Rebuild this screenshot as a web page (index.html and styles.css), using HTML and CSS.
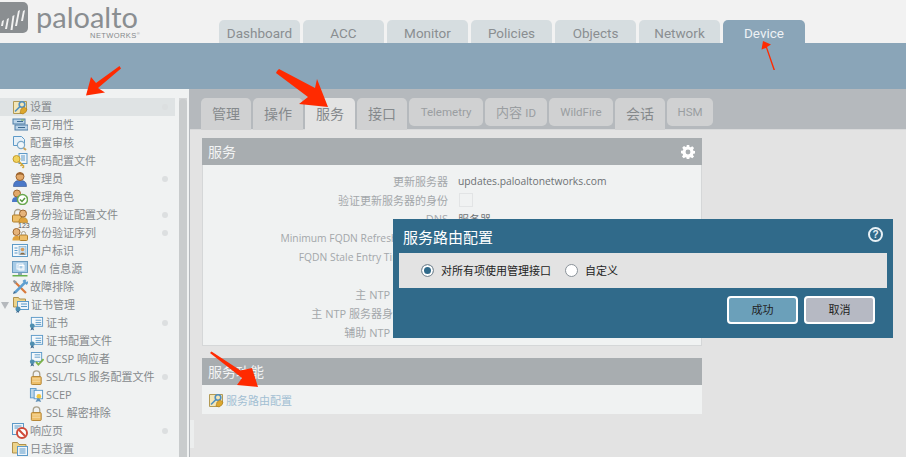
FILE: index.html
```html
<!DOCTYPE html>
<html lang="zh">
<head>
<meta charset="utf-8">
<title>Device</title>
<link rel="stylesheet" href="styles.css">
</head>
<body>
<svg class="defs" width="0" height="0" aria-hidden="true">
  <defs>
    <symbol id="i-keyfolder" viewBox="0 0 16 16"><path d="M1.5 2.5h13v9l-3 3h-10z" fill="#f3e6b8" stroke="#b39a55"/><circle cx="10" cy="5.5" r="2.8" fill="none" stroke="#4f8fc0" stroke-width="1.6"/><path d="M8 7.5l-5 5" stroke="#4f8fc0" stroke-width="1.6"/><path d="M9 10l3-2 3 2-1 3-3 2-3-1z" fill="#dca72f" stroke="#a87a1c" stroke-width=".6"/></symbol>
    <symbol id="i-server" viewBox="0 0 16 16"><rect x="1" y="2" width="12" height="5" fill="#b9d3e8" stroke="#4f7ea8"/><rect x="3" y="8" width="13" height="5" fill="#b9d3e8" stroke="#4f7ea8"/><path d="M5 4.500h6M6 10.500h7" stroke="#3d6a91"/><path d="M9 3h3" stroke="#7cb24a"/></symbol>
    <symbol id="i-audit" viewBox="0 0 16 16"><path d="M1.500 1.500h8l3 3v6h-11z" fill="#e7f0f7" stroke="#5d9ac8"/><circle cx="9" cy="10" r="3.600" fill="#f0f6fa" stroke="#7aa7c7" stroke-width="1.200"/><path d="M11.500 13l2.500 2" stroke="#c9a45b" stroke-width="2"/></symbol>
    <symbol id="i-key" viewBox="0 0 16 16"><rect x="7" y="0.500" width="8" height="10" fill="#eef4f9" stroke="#5d9ac8"/><path d="M9 3h4M9 5h4M9 7h4" stroke="#5d9ac8"/><circle cx="4.500" cy="6" r="3.500" fill="#f1d35c" stroke="#c59c2d"/><path d="M7 8.500l5 5M10 11.500l-1.500 1.500M12 13.500l-1.500 1.500" stroke="#d1a73a" stroke-width="1.700"/></symbol>
    <symbol id="i-user" viewBox="0 0 16 16"><path d="M1.500 15.500c0-5 2.500-6 6.500-6s6.500 1 6.500 6z" fill="#4a78c8" stroke="#2f518f" stroke-width=".6"/><circle cx="8" cy="5.500" r="4" fill="#e2a868" stroke="#9c6530"/><path d="M4.200 4.500c1-3.600 6.500-3.600 7.600 0-2.500-1.200-5-1.200-7.600 0z" fill="#9c6530"/></symbol>
    <symbol id="i-role" viewBox="0 0 16 16"><path d="M0 13c0-4 1.500-5 5-5s5 1 5 5z" fill="#4a78c8"/><circle cx="5" cy="4.500" r="3.500" fill="#e2a868" stroke="#9c6530"/><circle cx="10.500" cy="10.500" r="5" fill="#fff" stroke="#68a84e" stroke-width="1.500"/><path d="M8 10.500l2 2 3-3.500" fill="none" stroke="#55953b" stroke-width="1.500"/></symbol>
    <symbol id="i-lockuser" viewBox="0 0 16 16"><path d="M2.500 8V6a3.500 3.500 0 0 1 7 0v2" fill="none" stroke="#a9a08a" stroke-width="1.300"/><rect x="0.500" y="8" width="9" height="7" rx="1" fill="#eebf6a" stroke="#b07f2c"/><path d="M7 15.500c0-4 1.500-5 4-5s4.500 1 4.500 5z" fill="#e0a33f" stroke="#a87a1c" stroke-width=".6"/><circle cx="11" cy="6.500" r="3.500" fill="#e6b37a" stroke="#9c6530"/></symbol>
    <symbol id="i-lockseq" viewBox="0 0 16 16"><circle cx="4.500" cy="7" r="3.500" fill="#e6b37a" stroke="#9c6530"/><path d="M0.500 15.500c0-3.500 1.500-4.500 4-4.500s2 0 3 1v3.500z" fill="#e0a33f"/><rect x="7.500" y="10" width="8" height="5.500" rx="1" fill="#eebf6a" stroke="#b07f2c"/><path d="M9.500 10V8.500a2 2 0 0 1 4 0V10" fill="none" stroke="#a9a08a"/></symbol>
    <symbol id="i-id" viewBox="0 0 16 16"><rect x="0.500" y="1.500" width="15" height="12" fill="#f4f8fb" stroke="#5d9ac8"/><path d="M2.500 5h3M2.500 7.500h3M2.500 10h3" stroke="#5d9ac8"/><rect x="7" y="3.500" width="7" height="8" fill="#c6def0" stroke="#7aa7c7" stroke-width=".6"/><circle cx="10.500" cy="6.500" r="1.800" fill="#d79a5a"/><path d="M8 11.500c0-2.500 5-2.500 5 0z" fill="#8d6a43"/></symbol>
    <symbol id="i-vm" viewBox="0 0 16 16"><rect x="0.500" y="0.500" width="15" height="11" fill="#a8cbe6" stroke="#6d9cc0"/><rect x="5" y="3" width="6" height="5" fill="none" stroke="#fff"/><rect x="7" y="4.500" width="5" height="4.500" fill="none" stroke="#fff"/><rect x="6" y="12" width="4" height="2" fill="#8ea5b5"/><rect x="0.500" y="14" width="15" height="1.500" fill="#66b04e"/></symbol>
    <symbol id="i-tools" viewBox="0 0 16 16"><path d="M2 2l12 12" stroke="#d9793c" stroke-width="2.200"/><path d="M2 1l-1 1 2 3 2-2z" fill="#8b9aa5"/><path d="M14 2.500L3 13.500" stroke="#5f9fd0" stroke-width="2.500"/><path d="M10.500 2a3 3 0 0 1 4-1l-2 2 1 1 2-2a3 3 0 0 1-1 4z" fill="#5f9fd0"/><path d="M1 15l1-3 2 2z" fill="#3d6a91"/></symbol>
    <symbol id="i-folder" viewBox="0 0 16 16"><path d="M0.500 12V1.500h5l1.500 2h7v4h-6v4.500z" fill="#edd48b" stroke="#b0914c"/><rect x="5.500" y="5.500" width="10" height="9" fill="#eef4f9" stroke="#5d9ac8"/><path d="M7.500 8h6M7.500 10h6M7.500 12h6" stroke="#5d9ac8"/></symbol>
    <symbol id="i-certfolder" viewBox="0 0 16 16"><path d="M0.500 10V0.500h5l1 1.500h6v3h-7v5z" fill="#edd48b" stroke="#b0914c"/><rect x="4.500" y="4.500" width="11" height="8" fill="#eef4f9" stroke="#5d9ac8"/><path d="M8 7h6M8 9.500h6" stroke="#5d9ac8"/><circle cx="5" cy="12" r="2.500" fill="#4f8fb0"/><path d="M4 14l-1 2 2-1 1 1v-2z" fill="#3d6a91"/></symbol>
    <symbol id="i-cert" viewBox="0 0 16 16"><rect x="2.500" y="1.500" width="12" height="9.500" fill="#f4f8fb" stroke="#5d9ac8"/><path d="M7 4.500h6M7 7h6M7 9h6" stroke="#5d9ac8"/><circle cx="3.500" cy="10.500" r="2.600" fill="#4f8fb0"/><path d="M2.500 12.500l-1 3 2-1 2 1-1-3z" fill="#3d6a91"/></symbol>
    <symbol id="i-ocsp" viewBox="0 0 16 16"><rect x="2.500" y="0.500" width="11" height="9.500" fill="#f4f8fb" stroke="#5d9ac8"/><path d="M6 3h6M6 5.500h6" stroke="#5d9ac8"/><circle cx="3.500" cy="10.500" r="2.600" fill="#4f8fb0"/><path d="M2.500 12.500l-1 3 2-1 2 1-1-3z" fill="#3d6a91"/><path d="M7.500 10.500l2.500 3 5.500-6" fill="none" stroke="#7cb24a" stroke-width="2"/></symbol>
    <symbol id="i-lock" viewBox="0 0 16 16"><path d="M4.500 7V4.500a3.500 3.500 0 0 1 7 0V7" fill="none" stroke="#a9a08a" stroke-width="1.400"/><rect x="2.500" y="7" width="10.500" height="8.500" rx="1" fill="#eebf6a" stroke="#b07f2c"/><path d="M3.500 9.500h8.500M3.500 12h8.500" stroke="#f8dea8"/></symbol>
    <symbol id="i-scep" viewBox="0 0 16 16"><rect x="1.500" y="0.500" width="6" height="10" fill="#bcd6ea" stroke="#5d9ac8"/><rect x="5.500" y="2.500" width="9" height="9" fill="#f4f8fb" stroke="#5d9ac8"/><circle cx="10.500" cy="9" r="2.500" fill="#f1c840"/><path d="M9 11l-2 4 3-1 3 1-2-4z" fill="#5d8fb8"/></symbol>
    <symbol id="i-block" viewBox="0 0 16 16"><rect x="0.500" y="0.500" width="11" height="11" fill="#eef4f9" stroke="#5d9ac8"/><path d="M2.500 3h7M2.500 5h4" stroke="#5d9ac8"/><circle cx="10" cy="10" r="5" fill="#fff" stroke="#cf4a3a" stroke-width="2"/><path d="M6.800 6.800l6.400 6.400" stroke="#cf4a3a" stroke-width="2"/></symbol>
    <symbol id="i-gear" viewBox="0 0 16 16"><path fill="#fff" fill-rule="evenodd" d="M6.600 0h2.800l.4 2.200 1.200.5 1.900-1.300 2 2-1.300 1.900.5 1.200 2.200.4v2.800l-2.200.4-.5 1.200 1.300 1.900-2 2-1.900-1.300-1.200.5-.4 2.200H6.600l-.4-2.200-1.200-.5-1.900 1.300-2-2 1.300-1.900-.5-1.200L0 9.400V6.600l2.200-.4.500-1.200-1.300-1.900 2-2L5.300 2.400l1-.3zM8 5.200a2.800 2.800 0 1 0 0 5.600 2.800 2.800 0 0 0 0-5.600z"/></symbol>
  </defs>
</svg>

<header class="top">
  <div class="logo">
    <svg class="logo-mark" width="29" height="31" viewBox="0 0 29 31" aria-hidden="true">
      <rect x="-6" y="0" width="34" height="31" rx="5" fill="#8a8e91"/>
      <path d="M2 19l2-1-1 6H1zM7 17l2-1-2 11H5zM12.500 14l2-1-2 15h-2zM18 9l2-1-3 16h-2zM23 9l2-1-2 11h-2z" fill="#f2f2f2"/>
    </svg>
    <div class="logo-words">
      <span class="logo-name">paloalto</span>
      <span class="logo-sub">NETWORKS<sup class="logo-r">®</sup></span>
    </div>
  </div>
  <nav class="main-tabs">
    <span class="main-tab">Dashboard</span>
    <span class="main-tab">ACC</span>
    <span class="main-tab">Monitor</span>
    <span class="main-tab">Policies</span>
    <span class="main-tab">Objects</span>
    <span class="main-tab">Network</span>
    <span class="main-tab main-tab-active">Device</span>
  </nav>
</header>
<div class="band"></div>

<div class="work">
  <aside class="side">
    <ul class="tree">
      <li class="row row-on"><svg class="ico"><use href="#i-keyfolder"/></svg><span class="lbl">设置</span><i class="dot"></i></li>
      <li class="row"><svg class="ico"><use href="#i-server"/></svg><span class="lbl">高可用性</span></li>
      <li class="row"><svg class="ico"><use href="#i-audit"/></svg><span class="lbl">配置审核</span></li>
      <li class="row"><svg class="ico"><use href="#i-key"/></svg><span class="lbl">密码配置文件</span></li>
      <li class="row"><svg class="ico"><use href="#i-user"/></svg><span class="lbl">管理员</span><i class="dot"></i></li>
      <li class="row"><svg class="ico"><use href="#i-role"/></svg><span class="lbl">管理角色</span></li>
      <li class="row"><svg class="ico"><use href="#i-lockuser"/></svg><span class="lbl">身份验证配置文件</span><i class="dot"></i></li>
      <li class="row"><span class="ico-wrap"><svg class="ico"><use href="#i-lockseq"/></svg><b class="num">123</b></span><span class="lbl">身份验证序列</span><i class="dot"></i></li>
      <li class="row"><svg class="ico"><use href="#i-id"/></svg><span class="lbl">用户标识</span></li>
      <li class="row"><svg class="ico"><use href="#i-vm"/></svg><span class="lbl">VM 信息源</span></li>
      <li class="row"><svg class="ico"><use href="#i-tools"/></svg><span class="lbl">故障排除</span></li>
      <li class="row row-parent"><i class="tri"></i><svg class="ico"><use href="#i-certfolder"/></svg><span class="lbl">证书管理</span></li>
      <li class="row row-sub"><svg class="ico"><use href="#i-cert"/></svg><span class="lbl">证书</span><i class="dot"></i></li>
      <li class="row row-sub"><svg class="ico"><use href="#i-cert"/></svg><span class="lbl">证书配置文件</span></li>
      <li class="row row-sub"><svg class="ico"><use href="#i-ocsp"/></svg><span class="lbl">OCSP 响应者</span></li>
      <li class="row row-sub"><svg class="ico"><use href="#i-lock"/></svg><span class="lbl lbl-tight">SSL/TLS 服务配置文件</span><i class="dot"></i></li>
      <li class="row row-sub"><svg class="ico"><use href="#i-scep"/></svg><span class="lbl">SCEP</span></li>
      <li class="row row-sub"><svg class="ico"><use href="#i-lock"/></svg><span class="lbl">SSL 解密排除</span></li>
      <li class="row"><svg class="ico"><use href="#i-block"/></svg><span class="lbl">响应页</span><i class="dot"></i></li>
      <li class="row"><svg class="ico"><use href="#i-folder"/></svg><span class="lbl">日志设置</span></li>
    </ul>
    <div class="scroll"><div class="thumb"></div></div>
  </aside>

  <main class="content">
    <nav class="sub-tabs">
      <span class="sub-tab w50">管理</span>
      <span class="sub-tab w50">操作</span>
      <span class="sub-tab w50 sub-tab-active">服务</span>
      <span class="sub-tab w50">接口</span>
      <span class="sub-tab sub-short w74">Telemetry</span>
      <span class="sub-tab sub-short sub-mixed w62">内容 <em class="sub-lat">ID</em></span>
      <span class="sub-tab sub-short w64">WildFire</span>
      <span class="sub-tab w50">会话</span>
      <span class="sub-tab sub-short w46">HSM</span>
    </nav>
    <section class="pane">
      <div class="panel">
        <h2 class="panel-head">服务<svg class="gear" width="14" height="14"><use href="#i-gear"/></svg></h2>
        <div class="form">
          <div class="f-row"><span class="f-l">更新服务器</span><span class="f-v f-lat">updates.paloaltonetworks.com</span></div>
          <div class="f-row"><span class="f-l">验证更新服务器的身份</span><span class="check"></span></div>
          <div class="f-row"><span class="f-l">DNS</span><span class="f-v">服务器</span></div>
          <div class="f-row"><span class="f-l f-lat">Minimum FQDN Refresh Time (sec)</span></div>
          <div class="f-row"><span class="f-l f-lat">FQDN Stale Entry Timeout (sec)</span></div>
          <div class="f-row"></div>
          <div class="f-row"><span class="f-l">主 NTP 服务器地址</span></div>
          <div class="f-row"><span class="f-l">主 NTP 服务器身份验证类型</span></div>
          <div class="f-row"><span class="f-l">辅助 NTP 服务器地址</span></div>
        </div>
      </div>
      <div class="panel">
        <h2 class="panel-head">服务功能</h2>
        <div class="links"><svg class="ico"><use href="#i-keyfolder"/></svg><a class="link">服务路由配置</a></div>
      </div>
    </section>
    <span class="grip"></span>
  </main>
</div>

<div class="dialog">
  <div class="dlg-head"><h3 class="dlg-title">服务路由配置</h3>
    <span class="help">?</span></div>
  <div class="dlg-body">
    <span class="radio radio-on"></span><span class="r-lbl">对所有项使用管理接口</span>
    <span class="radio"></span><span class="r-lbl">自定义</span>
  </div>
  <div class="dlg-foot">
    <span class="btn btn-ok">成功</span>
    <span class="btn btn-cancel">取消</span>
  </div>
</div>

<svg class="arrows" width="906" height="457" viewBox="0 0 906 457" aria-hidden="true">
  <path fill="#ff2a00" d="M119.500 66L121 68.500 98 88l7 4.500-19 3 5-18.500 5 6z"/>
  <path fill="#ff2a00" d="M277 71l2-2 36 19 2-9 11 28-29-3 9-7-32-24z"/>
  <path fill="#ff2a00" d="M763 41l8 3.500-4 2.500 8 23h-1.500l-7.500-22-4.500 1.500z"/>
  <path fill="#ff2a00" d="M210 353l1.500-1.500 29 19 11.500-2.500 6 19-21-2 5-7-32-25z"/>
</svg>
</body>
</html>
```

FILE: styles.css
```css
* { box-sizing: border-box; }
html, body { margin: 0; padding: 0; }
body {
  width: 906px;
  height: 457px;
  overflow: hidden;
  position: relative;
  background: #f0f2f2;
  font-family: "Open Sans", "Noto Sans CJK SC", sans-serif;
  font-size: 11px;
  color: #8a8e91;
}
.defs { position: absolute; }

.top { height: 43px; background: #f2f2f2; display: flex; overflow: hidden; }
.logo { width: 219px; display: flex; flex: none; padding-top: 2px; }
.logo-mark { flex: none; }
.logo-words { display: flex; flex-direction: column; margin-left: 7px; width: 104px; }
.logo-name {
  font-family: "Lato", sans-serif;
  font-size: 29px;
  line-height: 30px;
  color: #8a8e91;
}
.logo-sub {
  font-family: "Liberation Sans", sans-serif;
  font-size: 7.500px;
  line-height: 8px;
  letter-spacing: .4px;
  text-align: right;
  color: #85898c;
}
.logo-r { font-size: 4px; line-height: 0; }

.main-tabs { display: flex; gap: 3px; padding-top: 20px; }
.main-tab {
  width: 81px;
  height: 23px;
  border-radius: 5px 5px 0 0;
  background: #d6dde0;
  color: #8a8e91;
  font-family: "Roboto", sans-serif;
  font-size: 13.500px;
  line-height: 26px;
  text-align: center;
}
.main-tab-active { background: #8aa5b8; color: #eef2f5; width: 82px; }

.band { height: 46px; background: #8aa5b8; }

.work { display: flex; height: 368px; }
.side { width: 190px; flex: none; display: flex; background: #f0f2f2; padding-top: 9px; border-right: 1px solid #b5b9bd; }
.tree { list-style: none; margin: 0; padding: 0; width: 175px; flex: none; }
.row {
  height: 18px;
  display: flex;
  align-items: center;
  padding-left: 12px;
  color: #85898c;
  line-height: 18px;
  white-space: nowrap;
  position: relative;
}
.row-on { background: #dfe3e4; }
.row-parent { padding-left: 0; }
.row-sub { padding-left: 29px; }
.ico { width: 16px; height: 16px; flex: none; margin-right: 2px; }
.row-sub .ico { width: 15px; height: 15px; margin-right: 2px; }
.ico-wrap { position: relative; display: flex; flex: none; }
.num {
  position: absolute;
  left: 6px;
  top: -3px;
  font: 7px/8px "Liberation Sans", sans-serif;
  color: #555;
}
.tri {
  width: 0;
  height: 0;
  flex: none;
  margin: 0 4px 0 1px;
  border-left: 4px solid transparent;
  border-right: 4px solid transparent;
  border-top: 7px solid #b5b9bd;
}
.lbl { flex: 1; }
.lbl-tight { letter-spacing: 0; }
.dot { width: 6px; height: 6px; border-radius: 50%; background: #dcdfe0; margin-right: 7px; flex: none; }
.scroll { width: 8px; margin-left: 4px; background: #d3d5d6; flex: none; }
.thumb { height: 100%; margin-top: 1px; border-radius: 4px 4px 0 0; background: #c9cccd; }

.content { flex: 1; background: #e3e3e3; position: relative; }
.sub-tabs {
  height: 41px;
  background: #b5b9bd;
  display: flex;
  align-items: flex-start;
  gap: 2px;
  padding: 9px 0 0 11px;
  border-bottom: 1px solid #d8d9da;
}
.sub-tab {
  height: 32px;
  background: #d0d1d2;
  border-radius: 5px 5px 0 0;
  text-align: center;
  font-family: "Noto Sans CJK SC", sans-serif;
  font-size: 14px;
  line-height: 31px;
  color: #85898c;
}
.sub-short { height: 28px; border-radius: 5px; font-family: "Roboto", "Noto Sans CJK SC", sans-serif; font-size: 11.500px; color: #9a9ea1; line-height: 29px; }
.sub-mixed { font-size: 13px; }
.sub-lat { font-style: normal; font-size: 11.500px; }
.sub-tab-active { background: #e3e3e3; color: #85898c; }
.w50 { width: 50px; }
.w74 { width: 74px; }
.w62 { width: 62px; }
.w64 { width: 64px; }
.w46 { width: 46px; }

.pane { padding: 8px 0 0 12px; width: 512px; display: flex; flex-direction: column; gap: 12px; }
.panel-head {
  margin: 0;
  height: 27px;
  background: #a8adb0;
  color: #f3f4f4;
  font-size: 14px;
  font-weight: normal;
  line-height: 27px;
  padding: 0 7px 0 6px;
  display: flex;
  justify-content: space-between;
  align-items: center;
}
.form {
  height: 181px;
  background: #f0f2f2;
  border: 1px solid #d5d7d8;
  border-top: 0;
  padding-top: 7px;
}
.f-row { height: 18.800px; display: flex; align-items: center; }
.f-l { width: 245px; flex: none; text-align: right; white-space: nowrap; color: #a3a7aa; }
.f-v { margin-left: 10px; color: #6d7174; white-space: nowrap; }
.f-lat { font-size: 10.300px; }
.check { width: 14px; height: 14px; margin-left: 11px; background: #f0f2f2; border: 1px solid #e2e4e5; }
.links { height: 29px; background: #f0f2f2; display: flex; align-items: center; padding-left: 6px; }
.links .ico { margin-right: 2px; }
.link { color: #a2bfd2; }
.grip {
  position: absolute;
  left: 0;
  top: 331px;
  width: 4px;
  height: 28px;
  background: #eceeee;
}

.dialog {
  position: absolute;
  left: 393px;
  top: 219px;
  width: 500px;
  height: 119px;
  background: #306a8a;
  padding: 0 6px;
  display: flex;
  flex-direction: column;
}
.dlg-head { height: 34px; display: flex; justify-content: space-between; align-items: center; padding: 2px 4px 0 4px; }
.dlg-title { margin: 0; color: #fff; font-size: 15px; font-weight: normal; line-height: 34px; font-family: "Noto Sans CJK SC", sans-serif; }
.help {
  width: 15px;
  height: 15px;
  border-radius: 50%;
  background: #306a8a;
  border: 2px solid #e8f1f6;
  color: #e8f1f6;
  font: bold 10px/11px "Liberation Sans", sans-serif;
  text-align: center;
  margin: -6px 0 0 0;
}
.dlg-body { height: 35px; background: #e3e3e3; display: flex; align-items: center; padding: 0 0 1px 22px; color: #222; }
.radio {
  width: 13px;
  height: 13px;
  border-radius: 50%;
  background: #fff;
  border: 1px solid #8a9299;
  margin-right: 7px;
  flex: none;
}
.radio-on { background: #306a8a; box-shadow: inset 0 0 0 2px #fff; }
.r-lbl { margin-right: 14px; }
.dlg-foot { display: flex; justify-content: flex-end; gap: 6px; padding: 8px 12px 0 0; }
.btn {
  width: 71px;
  height: 28px;
  border: 2px solid #fff;
  border-radius: 4px;
  text-align: center;
  line-height: 24px;
  color: #222;
}
.btn-ok { background: #6ba0ba; }
.btn-cancel { background: #b6b9c3; }

.arrows { position: absolute; left: 0; top: 0; pointer-events: none; }
```
